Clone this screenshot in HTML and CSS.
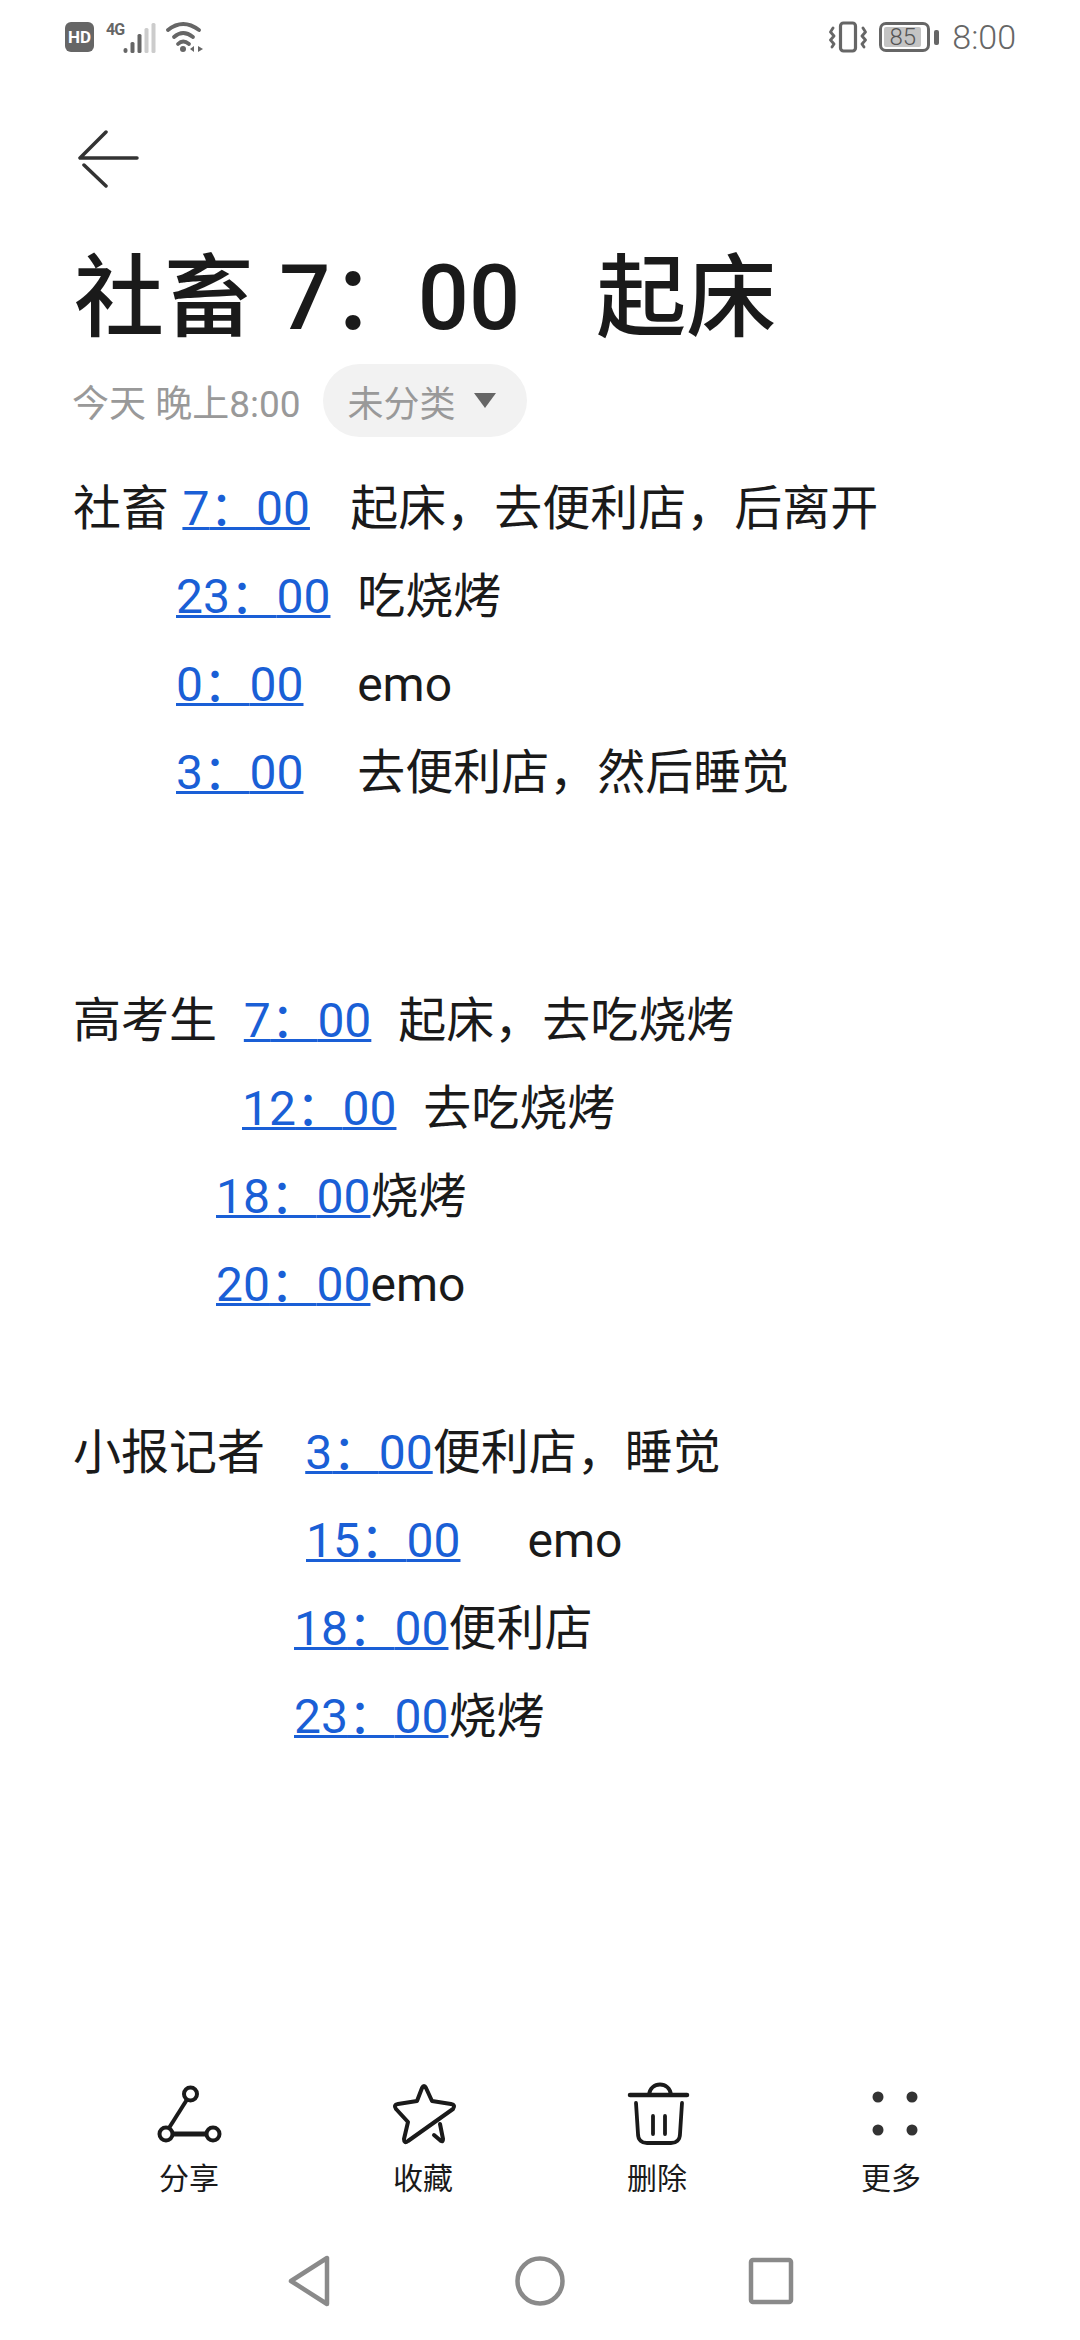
FILE: index.html
```html
<!DOCTYPE html>
<html lang="zh-CN">
<head>
    <meta charset="UTF-8">
    <meta name="viewport" content="width=device-width, initial-scale=1.0">
    <title>社畜 7:00 起床</title>
    <link rel="stylesheet" href="styles.css">
</head>
<body>
    <div class="phone">
        <div class="status-bar">
            <div class="status-left">
                <span class="hd-badge">HD</span>
                <span class="net-label">4G</span>
                <svg class="signal" width="33" height="32" viewBox="0 0 33 32">
                    <rect x="0.500" y="27" width="4" height="5" rx="2" fill="#666"/>
                    <rect x="7.500" y="21" width="4" height="11" rx="1.500" fill="#666"/>
                    <rect x="14.500" y="13" width="4" height="19" rx="1.500" fill="#666"/>
                    <rect x="21.500" y="7" width="4" height="25" rx="1.500" fill="#ccc"/>
                    <rect x="28.500" y="2" width="4" height="30" rx="1.500" fill="#ccc"/>
                </svg>
                <svg class="wifi" width="38" height="32" viewBox="0 0 38 32" fill="none" stroke="#666" stroke-width="3.800" stroke-linecap="round">
                    <path d="M2 9Q17 -3 33 9"/>
                    <path d="M8 16Q17 8 27 16"/>
                    <path d="M12 23Q17 18 23 23"/>
                    <circle cx="17" cy="28" r="3" fill="#666" stroke="none"/>
                    <path d="M28 25L24 28L28 31Z" fill="#666" stroke="none"/>
                    <path d="M32 25L37 28L32 31Z" fill="#666" stroke="none"/>
                </svg>
            </div>
            <div class="status-right">
                <svg class="vibrate" width="38" height="32" viewBox="0 0 38 32" fill="none" stroke="#666" stroke-linecap="round" stroke-linejoin="round">
                    <rect x="11.500" y="2" width="15" height="28" rx="3" stroke-width="3.200"/>
                    <path d="M4 7L1.500 11L5 15L1.500 19L5 23L3 26" stroke-width="2.800"/>
                    <path d="M34 7L36.500 11L33 15L36.500 19L33 23L35 26" stroke-width="2.800"/>
                </svg>
                <span class="battery"><span class="battery-level">85</span></span>
                <span class="battery-tip"></span>
                <span class="clock">8:00</span>
            </div>
        </div>

        <svg class="back-icon" width="62" height="58" viewBox="0 0 62 58" fill="none" stroke="#333" stroke-width="3.500" stroke-linecap="round" stroke-linejoin="round">
            <path d="M28 2L2 28H59"/>
            <path d="M6 35L28 56"/>
        </svg>

        <h1 class="note-title">社畜 7<span class="colon">：</span>00&nbsp;&nbsp;&nbsp;起床</h1>

        <div class="note-meta">
            <span class="note-date">今天 晚上8:00</span>
            <span class="category-pill">未分类<span class="pill-arrow"></span></span>
        </div>

        <div class="note-body">
            <div class="note-line">社畜 <a href="#">7<span class="colon">：</span>00</a>&nbsp;&nbsp; 起床，去便利店，后离开</div>
            <div class="note-line indent-a"><a href="#">23<span class="colon">：</span>00</a>&nbsp; 吃烧烤</div>
            <div class="note-line indent-a"><a href="#">0<span class="colon">：</span>00</a>&nbsp;&nbsp;&nbsp; emo</div>
            <div class="note-line indent-a"><a href="#">3<span class="colon">：</span>00</a>&nbsp;&nbsp;&nbsp; 去便利店，然后睡觉</div>

            <div class="note-line group-gap">高考生&nbsp; <a href="#">7<span class="colon">：</span>00</a>&nbsp; 起床，去吃烧烤</div>
            <div class="note-line indent-b"><a href="#">12<span class="colon">：</span>00</a>&nbsp; 去吃烧烤</div>
            <div class="note-line indent-c"><a href="#">18<span class="colon">：</span>00</a>烧烤</div>
            <div class="note-line indent-c"><a href="#">20<span class="colon">：</span>00</a>emo</div>

            <div class="note-line group-gap-small">小报记者&nbsp;&nbsp; <a href="#">3<span class="colon">：</span>00</a>便利店，睡觉</div>
            <div class="note-line indent-d"><a href="#">15<span class="colon">：</span>00</a>&nbsp;&nbsp;&nbsp;&nbsp; emo</div>
            <div class="note-line indent-e"><a href="#">18<span class="colon">：</span>00</a>便利店</div>
            <div class="note-line indent-e"><a href="#">23<span class="colon">：</span>00</a>烧烤</div>
        </div>

        <div class="toolbar">
            <div class="tool">
                <svg width="68" height="64" viewBox="0 0 68 64" fill="none" stroke="#1a1a1a" stroke-width="4">
                    <circle cx="35.500" cy="12" r="6.500"/>
                    <circle cx="11" cy="52" r="6.500"/>
                    <circle cx="58" cy="52" r="6.500"/>
                    <path d="M32 17.500L14 46"/>
                    <path d="M17 52H52" stroke-width="5"/>
                </svg>
                <span class="tool-label">分享</span>
            </div>
            <div class="tool">
                <svg width="68" height="64" viewBox="0 0 68 64" fill="none" stroke="#1a1a1a" stroke-width="4" stroke-linejoin="round" stroke-linecap="round">
                    <path d="M33 6Q35 2 37 6L43 19L62 22Q67 23 64 27L19 59Q15 62 15 57L19 40L7 27Q4 23 9 22L28 19Z"/>
                    <path d="M45 53L52 59Q54 60 54 57L51 42"/>
                </svg>
                <span class="tool-label">收藏</span>
            </div>
            <div class="tool">
                <svg width="68" height="64" viewBox="0 0 68 64" fill="none" stroke="#1a1a1a" stroke-width="3.800" stroke-linecap="round">
                    <path d="M7 13H64" stroke-width="4.500"/>
                    <path d="M26 13C27 -1 47 -1 48 13"/>
                    <path d="M13 21L15 52C15 58 19 61 24 61H48C53 61 57 58 57 52L59 21"/>
                    <path d="M30 34V52M42 34V52"/>
                </svg>
                <span class="tool-label">删除</span>
            </div>
            <div class="tool">
                <svg width="68" height="64" viewBox="0 0 68 64" fill="#333">
                    <circle cx="21" cy="15" r="5.500"/>
                    <circle cx="55" cy="15" r="5.500"/>
                    <circle cx="21" cy="48" r="5.500"/>
                    <circle cx="55" cy="48" r="5.500"/>
                </svg>
                <span class="tool-label">更多</span>
            </div>
        </div>

        <div class="nav-bar">
            <svg width="46" height="52" viewBox="0 0 46 52" fill="none" stroke="#8a8a8a" stroke-width="4.500" stroke-linejoin="round">
                <path d="M41 3V49L5 26Z"/>
            </svg>
            <svg width="50" height="52" viewBox="0 0 50 52" fill="none" stroke="#8a8a8a" stroke-width="4.500">
                <ellipse cx="25" cy="26" rx="22.500" ry="22.500"/>
            </svg>
            <svg width="46" height="52" viewBox="0 0 46 52" fill="none" stroke="#8a8a8a" stroke-width="4.500" stroke-linejoin="round">
                <rect x="3" y="5" width="40" height="42" rx="2"/>
            </svg>
        </div>
    </div>
</body>
</html>
```
FILE: styles.css
```css
body {
    margin: 0;
    background-color: #fff;
    font-family: Roboto, "Noto Sans CJK SC", sans-serif;
    color: #1a1a1a;
}

.phone {
    width: 1080px;
    height: 2340px;
    display: flex;
    flex-direction: column;
    overflow: hidden;
}

.status-bar {
    display: flex;
    justify-content: space-between;
    align-items: center;
    height: 36px;
    padding: 19px 64px 0 65px;
}

.status-left,
.status-right {
    display: flex;
    align-items: center;
}

.hd-badge {
    width: 29px;
    height: 30px;
    border-radius: 6px;
    background-color: #666;
    color: #fff;
    font-size: 17px;
    font-weight: 700;
    line-height: 30px;
    text-align: center;
}

.net-label {
    width: 17px;
    margin: -15px 0 0 12px;
    color: #666;
    font-size: 16px;
    font-weight: 700;
    letter-spacing: -1px;
    white-space: nowrap;
}

.wifi {
    margin-left: 10px;
}

.battery {
    display: flex;
    width: 51px;
    height: 30px;
    margin-left: 12px;
    padding: 2px;
    border: 3px solid #666;
    border-radius: 7px;
    box-sizing: border-box;
}

.battery-level {
    width: 37px;
    background-color: #c4c4c4;
    border-radius: 2px;
    color: #555;
    font-size: 24px;
    font-weight: 300;
    line-height: 20px;
    text-align: center;
}

.battery-tip {
    width: 5px;
    height: 15px;
    margin-left: 4px;
    border-radius: 2px;
    background-color: #666;
}

.clock {
    margin-left: 13px;
    color: #666;
    font-size: 34px;
    font-weight: 300;
}

.back-icon {
    margin: 75px 0 0 78px;
}

.note-title {
    margin: 61px 0 0 74px;
    font-size: 90px;
    font-weight: 500;
    line-height: 100px;
    white-space: nowrap;
    word-spacing: 3px;
}

/* colon hugs the digit before it, the rest of the em stays as a gap */
.colon {
    font-feature-settings: "palt";
    letter-spacing: 0.47em;
}

.note-meta {
    display: flex;
    align-items: center;
    margin: 15px 0 0 72px;
}

.note-date {
    color: #999;
    font-size: 37px;
}

.category-pill {
    display: flex;
    align-items: center;
    height: 73px;
    margin-left: 22px;
    padding: 0 31px 0 25px;
    border-radius: 37px;
    background-color: #f2f2f2;
    color: #999;
    font-size: 36px;
}

.pill-arrow {
    width: 0;
    height: 0;
    margin-left: 18px;
    border-left: 11px solid transparent;
    border-right: 11px solid transparent;
    border-top: 15px solid #666;
}

.note-body {
    flex: 1;
    margin: 28px 0 0 73px;
    font-size: 48px;
    word-spacing: 1.500px;
}

.note-line {
    height: 88px;
    line-height: 88px;
    white-space: nowrap;
}

.note-body a {
    color: #1a5fd6;
    text-decoration-thickness: 3px;
}

.indent-a { padding-left: 103px; }
.indent-b { padding-left: 169px; }
.indent-c { padding-left: 143px; }
.indent-d { padding-left: 233px; }
.indent-e { padding-left: 221px; }

.group-gap { margin-top: 160px; }
.group-gap-small { margin-top: 80px; }

.toolbar {
    display: grid;
    grid-template-columns: repeat(4, 234px);
    justify-content: center;
    margin-bottom: 46px;
}

.tool {
    display: flex;
    flex-direction: column;
    align-items: center;
    gap: 12px;
}

.tool-label {
    font-size: 30px;
    line-height: 42px;
}

.nav-bar {
    display: flex;
    justify-content: center;
    align-items: center;
    gap: 183px;
    height: 70px;
    margin-bottom: 24px;
}
```
